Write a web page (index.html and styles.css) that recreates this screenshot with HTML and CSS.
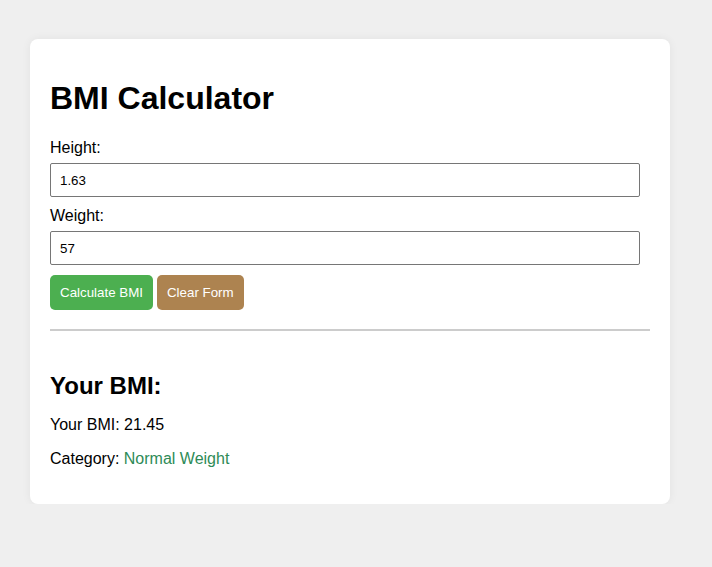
FILE: index.html
```html
<!DOCTYPE html>
<html>
<head>
<meta charset="utf-8">
<link rel="stylesheet" href="styles.css">
</head>
<body>
<div class="container">
  <h1>BMI Calculator</h1>
  <form class="form">
    <label class="label" for="height">Height:</label>
    <input class="input" id="height" type="text" value="1.63">
    <label class="label" for="weight">Weight:</label>
    <input class="input" id="weight" type="text" value="57">
    <div class="buttons">
      <button type="button" class="btn btn-calc">Calculate BMI</button>
      <button type="button" class="btn btn-clear">Clear Form</button>
    </div>
  </form>
  <hr class="divider">
  <div class="result">
    <h2>Your BMI:</h2>
    <p class="line">Your BMI: 21.45</p>
    <p class="line">Category: <span class="category">Normal Weight</span></p>
  </div>
</div>
</body>
</html>
```

FILE: styles.css
```css
html, body {
  margin: 0;
  padding: 0;
}
body {
  background: #efefef;
  font-family: "Liberation Sans", Arial, sans-serif;
  color: #000;
  padding: 39px 30px 0 30px;
  width: 640px;
}
.container {
  background: #fff;
  border-radius: 8px;
  box-shadow: 0 0 10px rgba(0, 0, 0, 0.06);
  padding: 20px;
}
h1 {
  font-size: 32px;
  font-weight: bold;
  margin: 21px 0 22px 0;
  line-height: 37px;
}
.form {
  display: flex;
  flex-direction: column;
  align-items: flex-start;
}
.label {
  font-size: 16px;
  line-height: 18px;
  margin-bottom: 6px;
}
.input {
  box-sizing: border-box;
  width: 590px;
  height: 34px;
  padding: 8px 9px;
  margin: 0 0 10px 0;
  border: 1px solid #767676;
  border-radius: 2px;
  font-family: "Liberation Sans", Arial, sans-serif;
  font-size: 13.33px;
  color: #000;
}
.buttons {
  display: flex;
  gap: 4px;
}
.btn {
  border: none;
  border-radius: 5px;
  padding: 10px;
  height: 35px;
  color: #fff;
  font-family: "Liberation Sans", Arial, sans-serif;
  font-size: 13.33px;
  line-height: 15px;
}
.btn-calc {
  background: #4caf50;
}
.btn-clear {
  background: #ad8350;
}
.divider {
  border: none;
  border-top: 2px solid #cccccc;
  margin: 19px 0 0 0;
  height: 0;
}
.result {
  padding-top: 41px;
}
h2 {
  font-size: 24px;
  font-weight: bold;
  line-height: 28px;
  margin: 0 0 16px 0;
}
.line {
  font-size: 16px;
  line-height: 18px;
  margin: 0 0 16px 0;
}
.category {
  color: #2e8b57;
}
```
